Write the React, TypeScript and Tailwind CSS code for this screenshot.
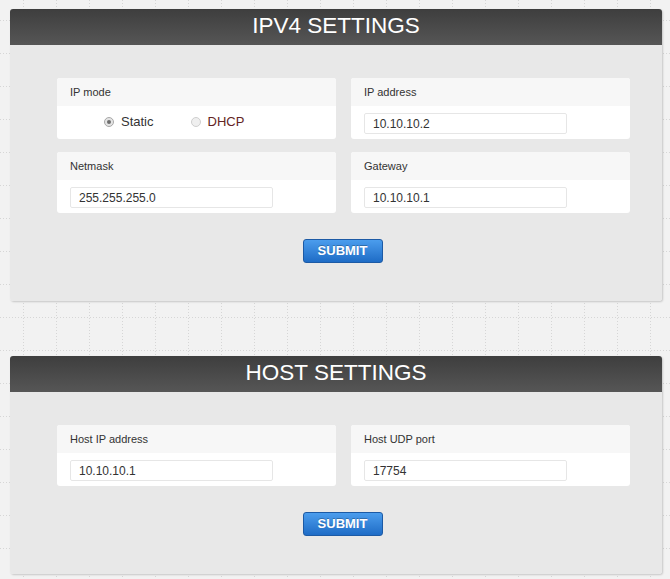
import React from "react";

const font = { fontFamily: '"Liberation Sans", Arial, sans-serif' };

function Card({ label, children }: { label: string; children: React.ReactNode }) {
  return (
    <div className="bg-white rounded-[3px] overflow-hidden flex flex-col">
      <div className="h-[28px] bg-[#f7f7f7] flex items-center px-[13px] text-[11px] text-[#333]">{label}</div>
      <div className="flex-1 px-[13px] pt-[7px] pb-[5px] flex items-center">{children}</div>
    </div>
  );
}

function Input({ value }: { value: string }) {
  return (
    <div className="w-[203px] h-[21px] border border-[#e6e6e6] rounded-[2px] bg-white flex items-center pl-[8px] text-[12px] text-[#333]">
      {value}
    </div>
  );
}

function Radio({ checked }: { checked?: boolean }) {
  return (
    <span
      className={
        checked
          ? "w-[10px] h-[10px] rounded-full border border-[#a8a8a8] bg-[#e4e4e4] flex items-center justify-center"
          : "w-[10px] h-[10px] rounded-full border border-[#cfcfcf] bg-[#efefef] flex items-center justify-center"
      }
    >
      {checked ? <span className="w-[4px] h-[4px] rounded-full bg-[#6e6e6e]" /> : null}
    </span>
  );
}

function Button() {
  return (
    <div className="flex justify-center">
      <button className="w-[80px] h-[24px] -translate-x-[1px] rounded-[3px] border border-[#1c5aa5] bg-gradient-to-b from-[#4b9ded] to-[#1e6cc6] text-white font-bold text-[13px] [text-shadow:0_-1px_0_rgba(0,0,0,0.25)] flex items-center justify-center">
        SUBMIT
      </button>
    </div>
  );
}

function Panel({ title, children }: { title: string; children: React.ReactNode }) {
  return (
    <div className="w-[652px] rounded-[3px] shadow-[1px_1px_2px_rgba(0,0,0,0.18)]">
      <div className="h-[36px] rounded-t-[3px] bg-gradient-to-b from-[#3e3e3e] to-[#565656] flex items-center justify-center pb-[2px]">
        <span className="text-white text-[22.5px] leading-none">{title}</span>
      </div>
      <div className="bg-[#e8e8e8] rounded-b-[3px] pt-[33px] pb-[38px] pl-[47px] pr-[32px]">{children}</div>
    </div>
  );
}

export default function App() {
  return (
    <div
      style={font}
      className={`min-h-[579px] bg-[#f2f2f2] bg-[url("data:image/svg+xml,%3Csvg%20xmlns='http://www.w3.org/2000/svg'%20width='33'%20height='33'%3E%3Cpath%20d='M0%2020.5H33M23.5%200V33'%20stroke='%23d6d6d6'%20stroke-dasharray='1%202'/%3E%3C/svg%3E")] pt-[9px] pl-[10px] flex flex-col gap-[55px]`}
    >
      <Panel title="IPV4 SETTINGS">
        <div className="grid grid-cols-2 gap-x-[15px] gap-y-[13px]">
          <Card label="IP mode">
            <div className="flex items-center pl-[34px] pb-[3px] text-[13px] text-[#333] h-[21px]">
              <Radio checked />
              <span className="ml-[7px]">Static</span>
              <span className="ml-[37px]">
                <Radio />
              </span>
              <span className="ml-[7px] text-[#632424]">DHCP</span>
            </div>
          </Card>
          <Card label="IP address">
            <Input value="10.10.10.2" />
          </Card>
          <Card label="Netmask">
            <Input value="255.255.255.0" />
          </Card>
          <Card label="Gateway">
            <Input value="10.10.10.1" />
          </Card>
        </div>
        <div className="mt-[26px]">
          <Button />
        </div>
      </Panel>
      <Panel title="HOST SETTINGS">
        <div className="grid grid-cols-2 gap-x-[15px]">
          <Card label="Host IP address">
            <Input value="10.10.10.1" />
          </Card>
          <Card label="Host UDP port">
            <Input value="17754" />
          </Card>
        </div>
        <div className="mt-[26px]">
          <Button />
        </div>
      </Panel>
    </div>
  );
}
